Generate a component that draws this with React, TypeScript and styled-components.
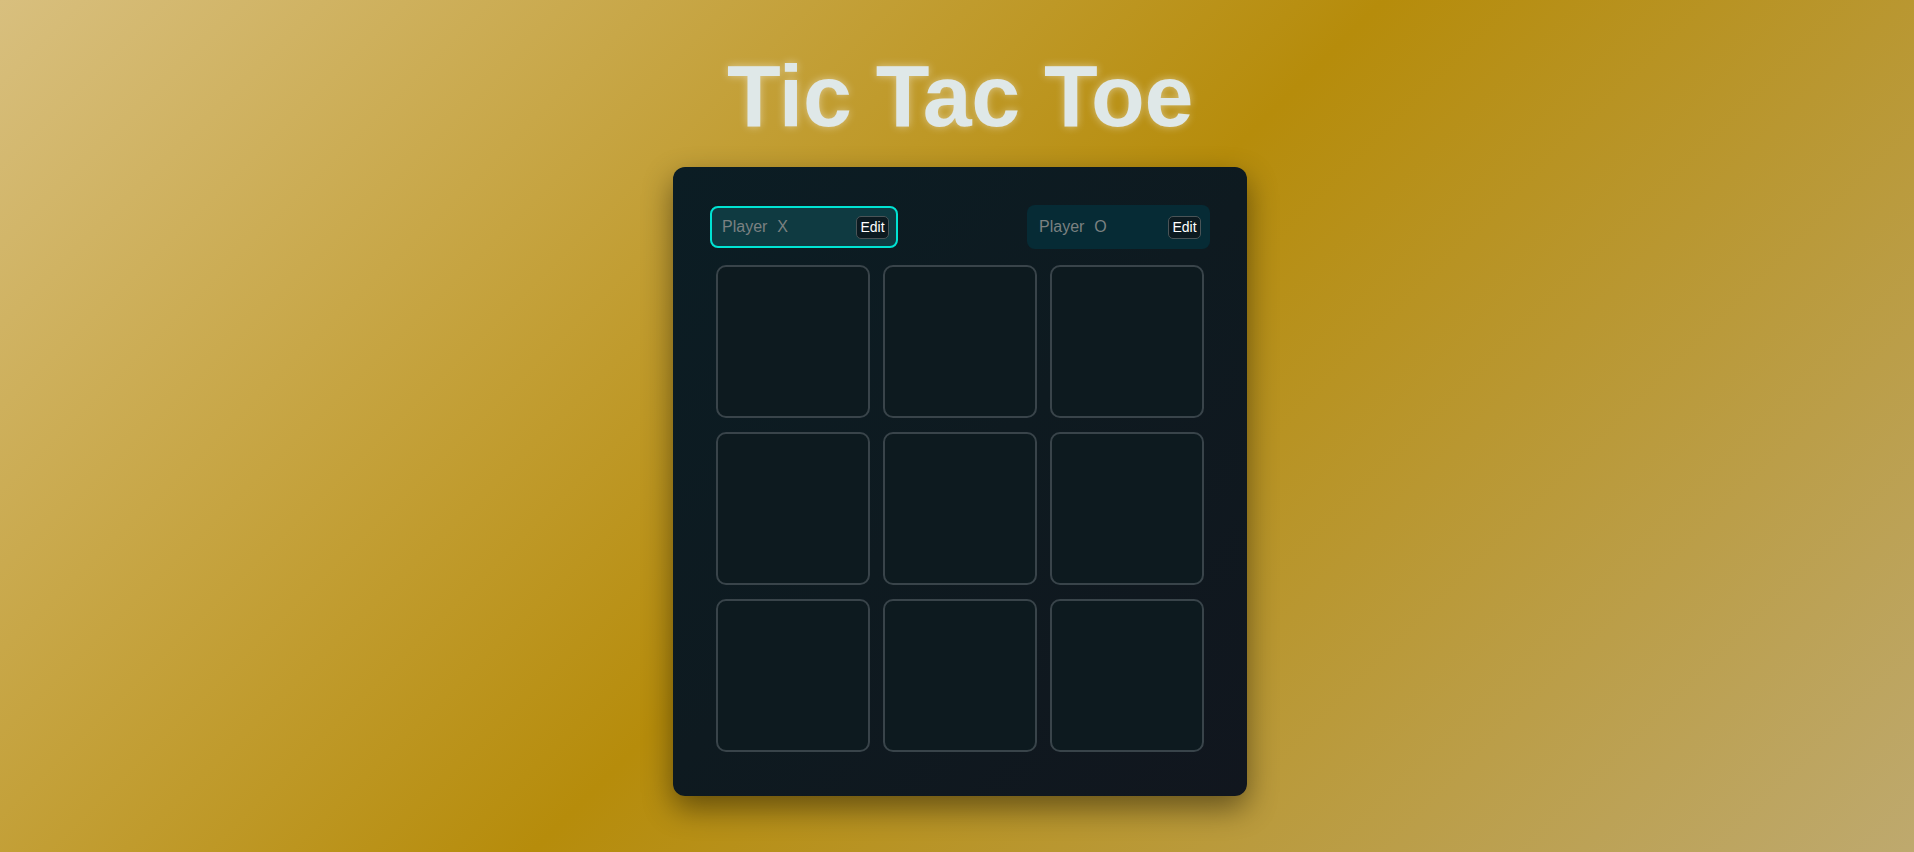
import * as React from 'react';
import styled, { createGlobalStyle } from 'styled-components';

const GlobalStyle = createGlobalStyle`
  html, body {
    margin: 0;
    padding: 0;
  }
  body {
    min-height: 100vh;
    font-family: 'Liberation Sans', Arial, sans-serif;
    background: linear-gradient(135deg, #d8bf7e 0%, #b68c0b 50%, #bea96e 100%);
    background-attachment: fixed;
  }
`;

const Page = styled.main`
  min-height: 100vh;
  box-sizing: border-box;
  padding: 52px 0 0 6px;
  display: flex;
  flex-direction: column;
  align-items: center;
`;

const Title = styled.h1`
  margin: 0 0 27px 0;
  font-family: 'Liberation Sans', Arial, sans-serif;
  font-size: 88px;
  line-height: 88px;
  font-weight: 700;
  letter-spacing: -0.3px;
  color: #dfe8e8;
  text-shadow: 0 0 8px rgba(255, 255, 255, 0.45);
`;

const Board = styled.section`
  width: 574px;
  box-sizing: border-box;
  padding: 38px 37px 44px 37px;
  border-radius: 12px;
  background: linear-gradient(135deg, #0b1d24 0%, #0e1a20 50%, #11161e 100%);
  box-shadow: 0 12px 30px rgba(0, 0, 0, 0.45);
`;

const Players = styled.ol`
  list-style: none;
  margin: 0 0 16px 0;
  padding: 0;
  height: 44px;
  display: flex;
  align-items: center;
  justify-content: space-between;
`;

const PlayerBox = styled.li<{ $active?: boolean; $width: number }>`
  width: ${(p) => p.$width}px;
  height: ${(p) => (p.$active ? 42 : 44)}px;
  box-sizing: border-box;
  display: flex;
  align-items: center;
  padding: 0 7px 0 10px;
  border-radius: 8px;
  border: 2px solid ${(p) => (p.$active ? '#00e3d3' : 'transparent')};
  background: ${(p) => (p.$active ? '#0f3a41' : '#062b35')};
`;

const PlayerName = styled.span`
  font-size: 16px;
  color: #7b8181;
`;

const PlayerSymbol = styled.span`
  flex: 1;
  margin-left: 10px;
  font-size: 16px;
  color: #7b8181;
`;

const EditButton = styled.button`
  width: 33px;
  height: 23px;
  padding: 0;
  box-sizing: border-box;
  border: 1px solid #4a5457;
  border-radius: 5px;
  background: #0c1a20;
  color: #ffffff;
  font-family: 'Liberation Sans', Arial, sans-serif;
  font-size: 14px;
  cursor: pointer;
`;

const Grid = styled.ol`
  list-style: none;
  margin: 0 6px;
  padding: 0;
  display: grid;
  grid-template-columns: repeat(3, 154px);
  grid-auto-rows: 153px;
  column-gap: 13px;
  row-gap: 14px;
`;

const Cell = styled.li`
  box-sizing: border-box;
  border: 2px solid #39444a;
  border-radius: 10px;
  background: #0d1a1f;
`;

const players = [
  { name: 'Player', symbol: 'X', width: 188, active: true },
  { name: 'Player', symbol: 'O', width: 183, active: false },
];

export default function App() {
  const cells = Array.from({ length: 9 }, (_, i) => i);

  return (
    <>
      <GlobalStyle />
      <Page>
        <Title>Tic Tac Toe</Title>
        <Board>
          <Players>
            {players.map((p) => (
              <PlayerBox key={p.symbol} $active={p.active} $width={p.width}>
                <PlayerName>{p.name}</PlayerName>
                <PlayerSymbol>{p.symbol}</PlayerSymbol>
                <EditButton>Edit</EditButton>
              </PlayerBox>
            ))}
          </Players>
          <Grid>
            {cells.map((i) => (
              <Cell key={i} />
            ))}
          </Grid>
        </Board>
      </Page>
    </>
  );
}
